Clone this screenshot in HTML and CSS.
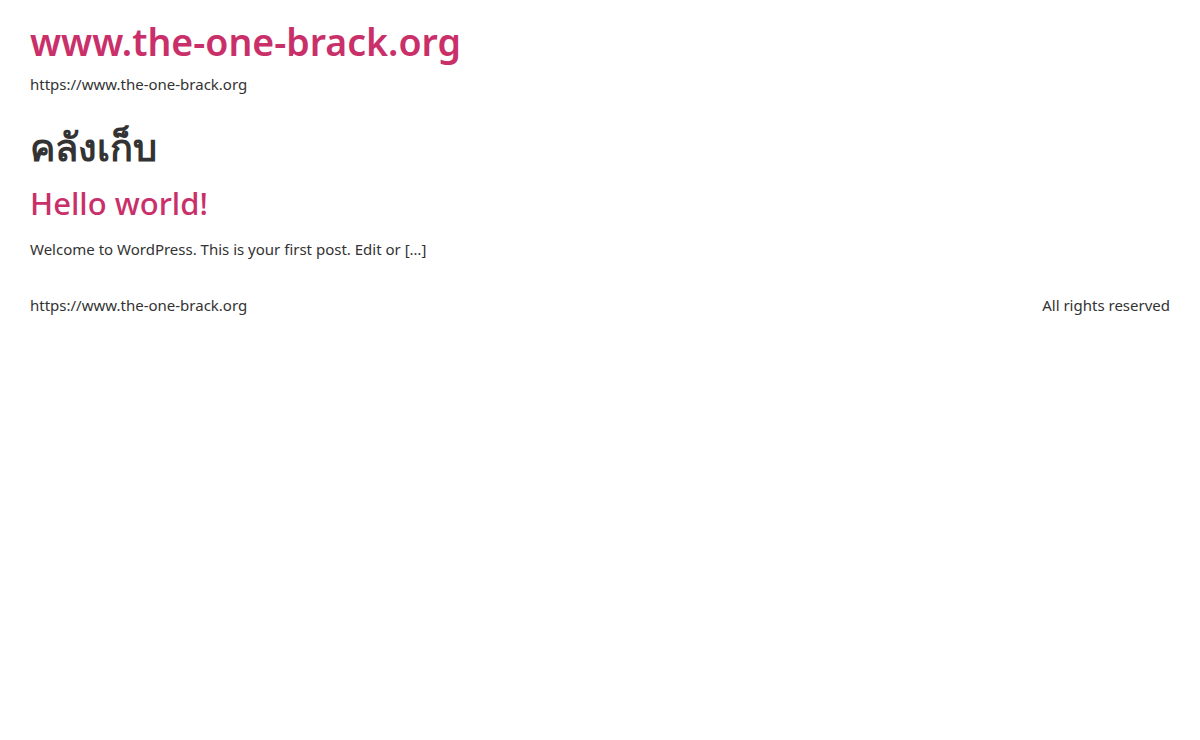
FILE: index.html
```html
<!DOCTYPE html>
<html lang="th">
<head>
<meta charset="utf-8">
<title>www.the-one-brack.org</title>
<link rel="stylesheet" href="styles.css">
</head>
<body>
<div class="page">
  <header class="site-header">
    <a class="site-title" href="#">www.the-one-brack.org</a>
    <p class="site-desc">https://www.the-one-brack.org</p>
  </header>
  <main class="content">
    <h1 class="archive-title">คลังเก็บ</h1>
    <article class="post">
      <h2 class="post-title"><a href="#">Hello world!</a></h2>
      <p class="excerpt">Welcome to WordPress. This is your first post. Edit or […]</p>
    </article>
  </main>
  <footer class="site-footer">
    <span>https://www.the-one-brack.org</span>
    <span>All rights reserved</span>
  </footer>
</div>
</body>
</html>
```
FILE: styles.css
```css
html, body {
  margin: 0;
  padding: 0;
  background: #fff;
}
body {
  font-family: "Noto Sans", "Open Sans", sans-serif;
  color: #333;
  font-size: 15px;
}
.page {
  padding: 18px 30px;
}
.site-header {
  display: flex;
  flex-direction: column;
}
.site-title {
  color: #c9306a;
  text-decoration: none;
  font-size: 37.5px;
  font-weight: 600;
  line-height: 48px;
}
.site-desc {
  margin: 8px 0 0;
  line-height: 20px;
}
.archive-title {
  margin: 29px 0 0;
  font-size: 38px;
  font-weight: 600;
  line-height: 46px;
}
.post-title {
  margin: 14px 0 0;
  font-size: 31px;
  font-weight: 500;
  line-height: 40px;
}
.post-title a {
  color: #c9306a;
  text-decoration: none;
}
.excerpt {
  margin: 15px 0 0;
  line-height: 22px;
}
.site-footer {
  display: flex;
  justify-content: space-between;
  margin-top: 34px;
  line-height: 22px;
}
```
